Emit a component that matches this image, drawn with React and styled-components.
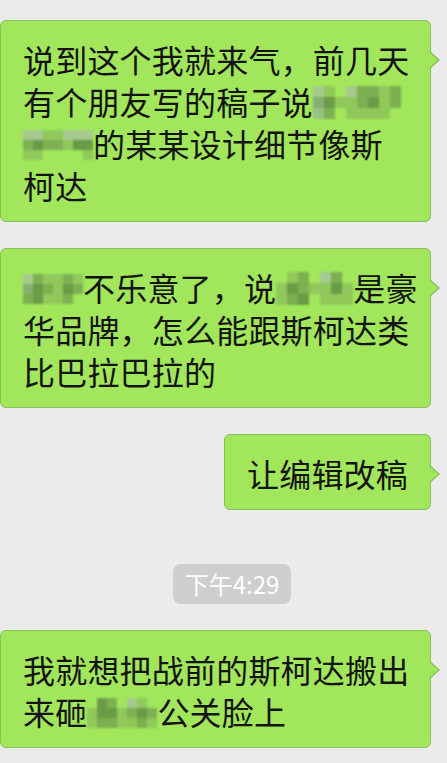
import React from "react";
import styled, { createGlobalStyle } from "styled-components";

const GlobalStyle = createGlobalStyle`
  html, body {
    margin: 0;
    padding: 0;
    background: #ebebeb;
  }
  body {
    font-family: "Noto Sans CJK SC", "Noto Sans", sans-serif;
    width: 447px;
    height: 763px;
    overflow: hidden;
  }
`;

const Chat = styled.div`
  display: flex;
  flex-direction: column;
  gap: 26px;
  padding-top: 20px;
  width: 447px;
  box-sizing: border-box;
`;

const Row = styled.div`
  display: flex;
  justify-content: flex-end;
  padding-right: 16px;
`;

const Bubble = styled.div`
  position: relative;
  box-sizing: border-box;
  width: ${(p) => (p.$wide ? "431px" : "auto")};
  background: #a2e65c;
  border: 1px solid #86c155;
  border-radius: 6px;
  padding: 17px 22px 15px 22px;
  color: #141414;
  font-size: 32px;
  line-height: 42px;
  letter-spacing: 0.2px;

  &::before {
    content: "";
    position: absolute;
    right: -10px;
    top: 30px;
    border-top: 9px solid transparent;
    border-bottom: 9px solid transparent;
    border-left: 10px solid #86c155;
  }
  &::after {
    content: "";
    position: absolute;
    right: -8px;
    top: 31px;
    border-top: 8px solid transparent;
    border-bottom: 8px solid transparent;
    border-left: 9px solid #a2e65c;
  }
`;

const Line = styled.div`
  display: flex;
  align-items: center;
  height: 42px;
  white-space: nowrap;
`;

const Text = styled.span`
  display: inline-block;
`;

const MosaicGrid = styled.span`
  display: inline-grid;
  grid-template-columns: repeat(${(p) => p.$cols}, ${(p) => p.$cell}px);
  grid-auto-rows: ${(p) => p.$cell}px;
  margin-top: 3px;
  filter: blur(1.1px);
`;

const Cell = styled.span`
  display: block;
  background: ${(p) => p.$c};
`;

const palette = {
  a: "#a2e65c",
  b: "#90c95a",
  c: "#7cb052",
  d: "#6a9b46",
  e: "#a6c990",
  f: "#88ae72",
  g: "#98c284",
};

function Mosaic({ rows, cell = 10 }) {
  const cols = rows[0].length;
  const cells = [];
  rows.forEach((r, ri) =>
    r.split("").forEach((ch, ci) =>
      cells.push(<Cell key={ri + "-" + ci} $c={palette[ch]} />)
    )
  );
  return (
    <MosaicGrid $cols={cols} $cell={cell} aria-hidden="true">
      {cells}
    </MosaicGrid>
  );
}

const TimeRow = styled.div`
  display: flex;
  justify-content: center;
  margin-top: 28px;
  padding-left: 17px;
`;

const TimeStamp = styled.div`
  background: #cecece;
  color: #ffffff;
  font-family: "Noto Sans CJK SC", "Noto Sans", sans-serif;
  font-size: 24px;
  line-height: 40px;
  height: 40px;
  padding: 0 12px;
  border-radius: 8px;
`;

export default function App() {
  return (
    <>
      <GlobalStyle />
      <Chat>
        <Row>
          <Bubble $wide>
            <Line>
              <Text>说到这个我就来气，前几天</Text>
            </Line>
            <Line>
              <Text>有个朋友写的稿子说</Text>
              <Mosaic
                cell={11}
                rows={["ebaeccbc", "fdbbcdbc", "gcabbbba"]}
              />
            </Line>
            <Line>
              <Mosaic cell={10} rows={["eebbeee", "cdccbdd", "bbaaaab"]} />
              <Text>的某某设计细节像斯</Text>
            </Line>
            <Line>
              <Text>柯达</Text>
            </Line>
          </Bubble>
        </Row>
        <Row>
          <Bubble $wide>
            <Line>
              <Mosaic cell={10} rows={["ecbbcb", "fdcbdc", "cdbbca"]} />
              <Text>不乐意了，说</Text>
              <Mosaic cell={11} rows={["abcaeca", "bdcbbdb", "bcdabbb"]} />
              <Text>是豪</Text>
            </Line>
            <Line>
              <Text>华品牌，怎么能跟斯柯达类</Text>
            </Line>
            <Line>
              <Text>比巴拉巴拉的</Text>
            </Line>
          </Bubble>
        </Row>
        <Row>
          <Bubble>
            <Line>
              <Text>让编辑改稿</Text>
            </Line>
          </Bubble>
        </Row>
        <TimeRow>
          <TimeStamp>下午4:29</TimeStamp>
        </TimeRow>
        <Row>
          <Bubble $wide>
            <Line>
              <Text>我就想把战前的斯柯达搬出</Text>
            </Line>
            <Line>
              <Text>来砸</Text>
              <Mosaic cell={10} rows={["adcaeba", "bddbcdc", "bccbbcb"]} />
              <Text>公关脸上</Text>
            </Line>
          </Bubble>
        </Row>
      </Chat>
    </>
  );
}
